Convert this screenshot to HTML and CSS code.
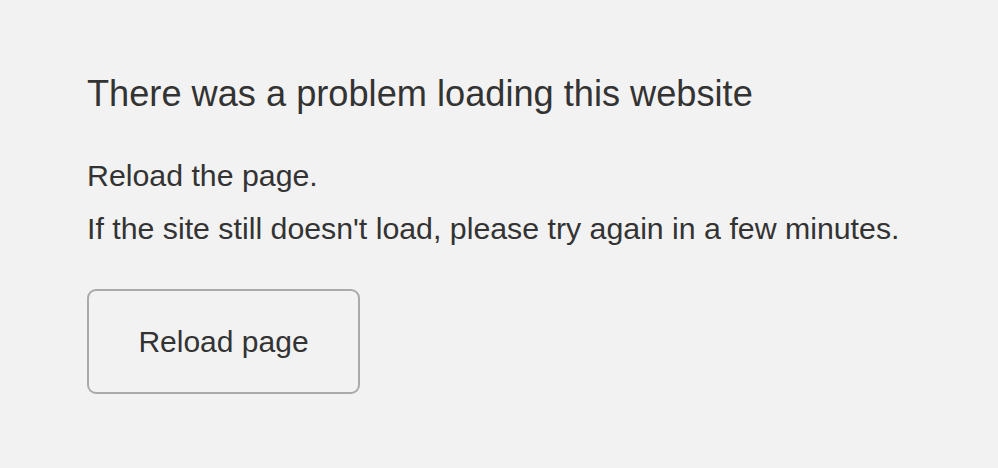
FILE: index.html
```html
<!DOCTYPE html>
<html lang="en">
<head>
  <meta charset="UTF-8">
  <meta name="viewport" content="width=device-width, initial-scale=1.0">
  <title>Problem loading page</title>
  <link rel="stylesheet" href="styles.css">
</head>
<body>
  <div class="error">
    <h1 class="title">There was a problem loading this website</h1>
    <p class="message">Reload the page.</p>
    <p class="message">If the site still doesn't load, please try again in a few minutes.</p>
    <button class="reload" onclick="location.reload()">Reload page</button>
  </div>
</body>
</html>
```

FILE: styles.css
```css
body {
  margin: 0;
  background: #f2f2f2;
  color: #333333;
  font-family: "Liberation Sans", Arial, sans-serif;
}

.error {
  padding: 72px 87px;
}

.title {
  margin: 0 0 42px;
  font-size: 36.2px;
  font-weight: normal;
  line-height: 44px;
}

.message {
  margin: 0 0 17px;
  font-size: 30.3px;
  line-height: 36px;
}

.reload {
  display: block;
  margin-top: 42px;
  width: 273px;
  height: 105px;
  background: transparent;
  color: #333333;
  font-family: inherit;
  font-size: 30px;
  border: 2px solid #aaaaaa;
  border-radius: 9px;
  cursor: pointer;
}
```
